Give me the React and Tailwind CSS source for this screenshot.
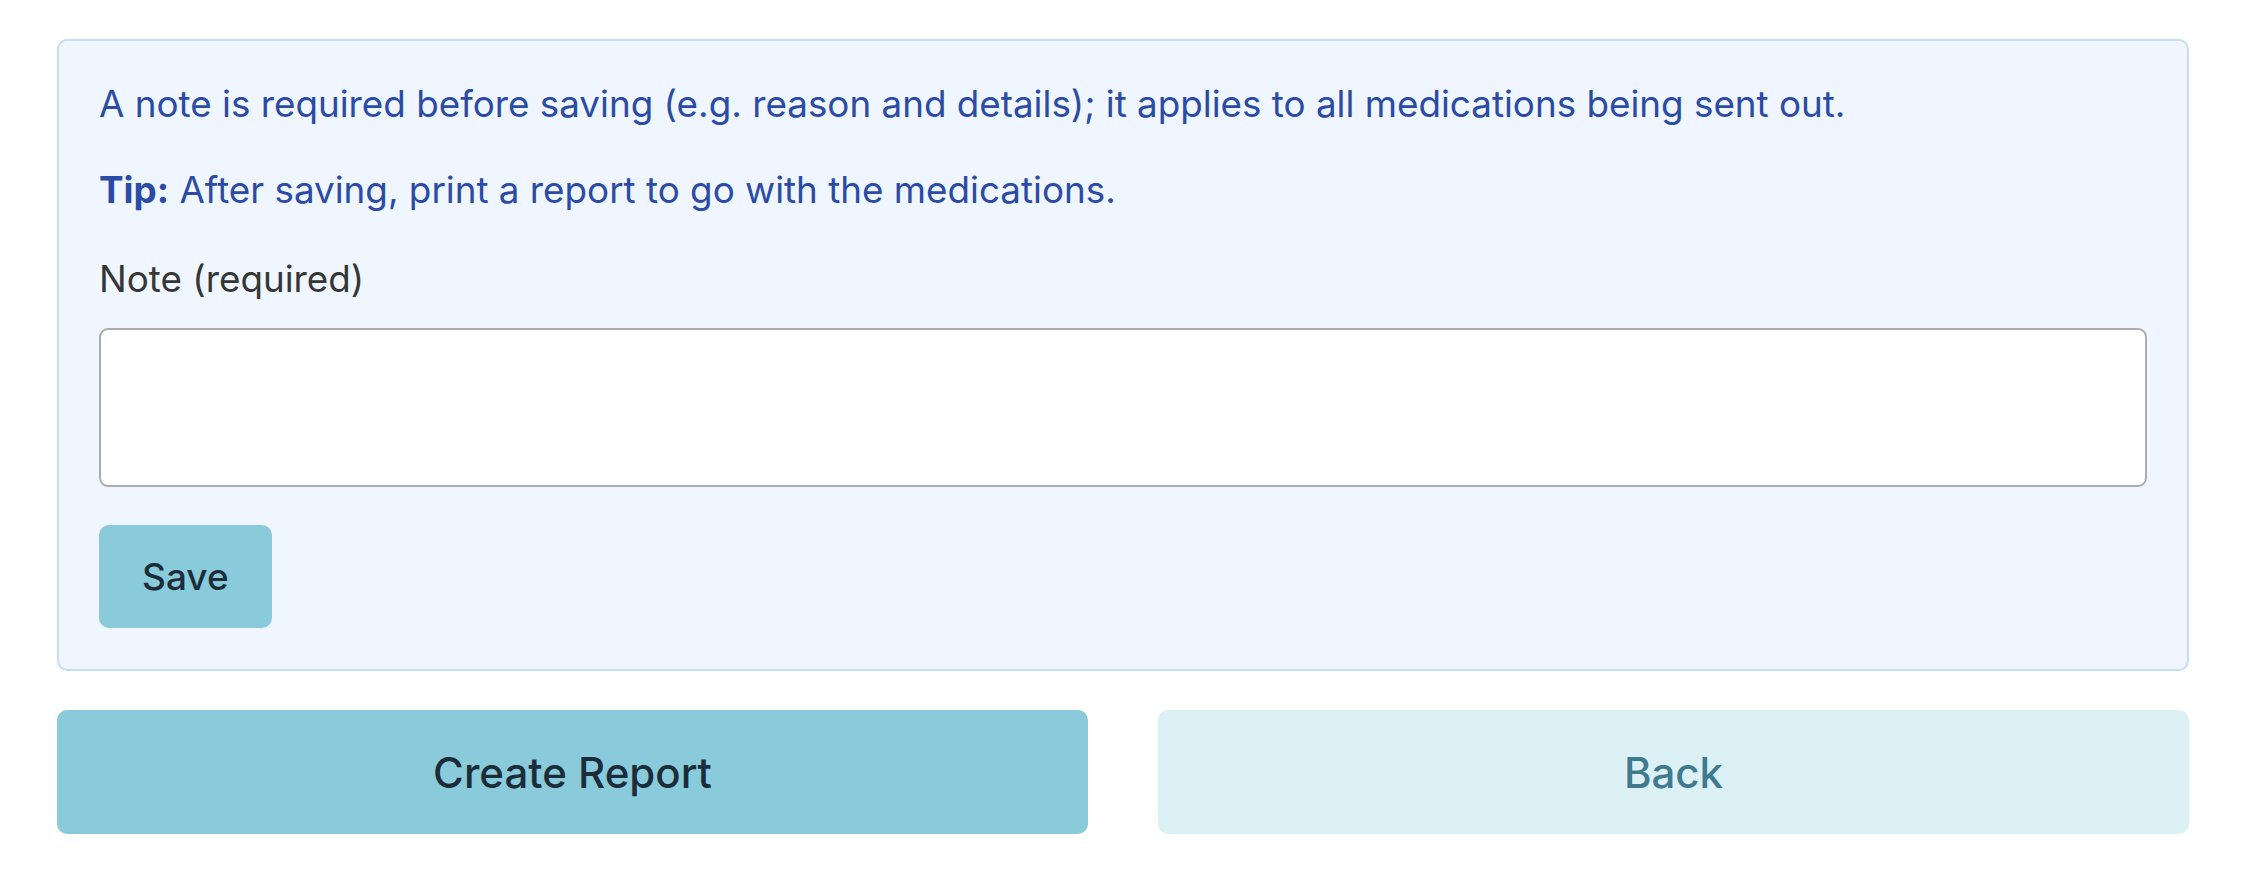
import React, { useState } from 'react';

const font = { fontFamily: 'Inter, "Noto Sans", sans-serif' };

const App = () => {
    const [note, setNote] = useState('');

    return (
        <div className="min-h-screen bg-white pl-[57px] pr-[53px] pt-[39px]" style={font}>
            <div className="rounded-[10px] border-2 border-[#c6ddf8] bg-[#eff6ff] px-[40px] pt-[36px] pb-[41px]">
                <p className="mb-[32px] text-[36.8px] leading-[54px] text-[#2b4ba5]">
                    A note is required before saving (e.g. reason and details); it applies to all medications being sent out.
                </p>
                <p className="mb-[35px] text-[36.8px] leading-[54px] text-[#2b4ba5]">
                    <strong className="font-bold">Tip:</strong> After saving, print a report to go with the medications.
                </p>
                <label htmlFor="note" className="block text-[36.8px] leading-[54px] text-[#363636]">
                    Note (required)
                </label>
                <textarea
                    id="note"
                    value={note}
                    onChange={(e) => setNote(e.target.value)}
                    className="mt-[22px] block h-[159px] w-full resize-none rounded-[9px] border-2 border-[#acacac] bg-white px-4 py-3 text-[36px] outline-none"
                />
                <button className="mt-[38px] h-[103px] rounded-[10px] bg-[#8acbdb] px-[43px] text-[37px] font-medium text-[#1b2d3a]">
                    Save
                </button>
            </div>
            <div className="mt-[39px] grid grid-cols-2 gap-[70px]">
                <button className="h-[124px] rounded-[10px] bg-[#8acbdb] text-[42px] font-medium text-[#1b2d3a]">
                    Create Report
                </button>
                <button className="h-[124px] rounded-[10px] bg-[#dcf1f5] text-[42px] font-medium text-[#3f7a91]">
                    Back
                </button>
            </div>
        </div>
    );
};

export default App;
